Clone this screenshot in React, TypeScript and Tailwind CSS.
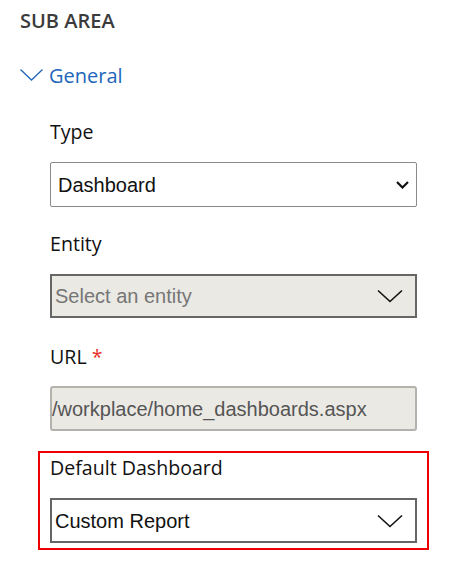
import { useState } from "react"

const LABEL = "text-[19.6px] leading-[26px] text-[#111] [font-family:'Open_Sans',sans-serif]"
const FIELD = "[font-family:'Liberation_Sans',Arial,sans-serif] text-[20px]"

function BigChevron() {
  return (
    <svg width="26" height="14" viewBox="0 0 26 14" fill="none" className="shrink-0">
      <path d="M1 1.5 L13 12.5 L25 1.5" stroke="#111" strokeWidth="1.6" />
    </svg>
  )
}

export default function App() {
  const [open, setOpen] = useState(true)

  return (
    <div className="pl-[20px] pt-[7px] bg-white min-h-screen [font-family:'Open_Sans',sans-serif]">
      <h2 className="text-[20px] leading-[27px] font-semibold text-[#3b3b3b]">SUB AREA</h2>

      {/* Section toggle */}
      <button
        onClick={() => setOpen(!open)}
        className="mt-[28px] flex items-center gap-[6px] text-[20px] leading-[27px] text-[#2266bb]"
      >
        <svg width="23" height="12" viewBox="0 0 23 12" fill="none" className="-mt-[2px]">
          <path d="M0.5 0.5 L11.5 11 L22.5 0.5" stroke="#2266bb" strokeWidth="1.3" />
        </svg>
        General
      </button>

      {open && (
        <div className="ml-[30px] w-[367px] mt-[30px]">
          {/* Type */}
          <div className={LABEL}>Type</div>
          <div className="mt-[17px] h-[45px] flex items-center justify-between border border-[#8a8a8a] rounded-[2px] pl-[7px] pr-[7px]">
            <span className={`${FIELD} text-[#111]`}>Dashboard</span>
            <svg width="13" height="8" viewBox="0 0 13 8" fill="none">
              <path d="M1 1 L6.5 6.5 L12 1" stroke="#111" strokeWidth="2.2" />
            </svg>
          </div>

          {/* Entity */}
          <div className={`${LABEL} mt-[24px]`}>Entity</div>
          <div className="mt-[17px] h-[44px] flex items-center justify-between border-2 border-[#666] bg-[#eae9e3] pl-[3px] pr-[12px]">
            <span className={`${FIELD} text-[#767676]`}>Select an entity</span>
            <BigChevron />
          </div>

          {/* URL */}
          <div className={`${LABEL} mt-[26px]`}>
            URL <span className="text-[#e8302a]">*</span>
          </div>
          <div className="mt-[16px] h-[45px] flex items-center border-2 border-[#b4b2ac] rounded-[3px] bg-[#ebe9e4] pl-[0px] overflow-hidden">
            <span className={`${FIELD} text-[#555] whitespace-nowrap`}>/workplace/home_dashboards.aspx</span>
          </div>

          {/* Default Dashboard (highlighted) */}
          <div className="mt-[20px] -mx-[12px] border-2 border-[#ee0000] pt-[2px] pb-[5px] px-[10px]">
            <div className={LABEL}>Default Dashboard</div>
            <div className="mt-[17px] h-[45px] flex items-center justify-between border-2 border-[#666] bg-white pl-[3px] pr-[12px]">
              <span className={`${FIELD} text-[#111]`}>Custom Report</span>
              <BigChevron />
            </div>
          </div>
        </div>
      )}
    </div>
  )
}
